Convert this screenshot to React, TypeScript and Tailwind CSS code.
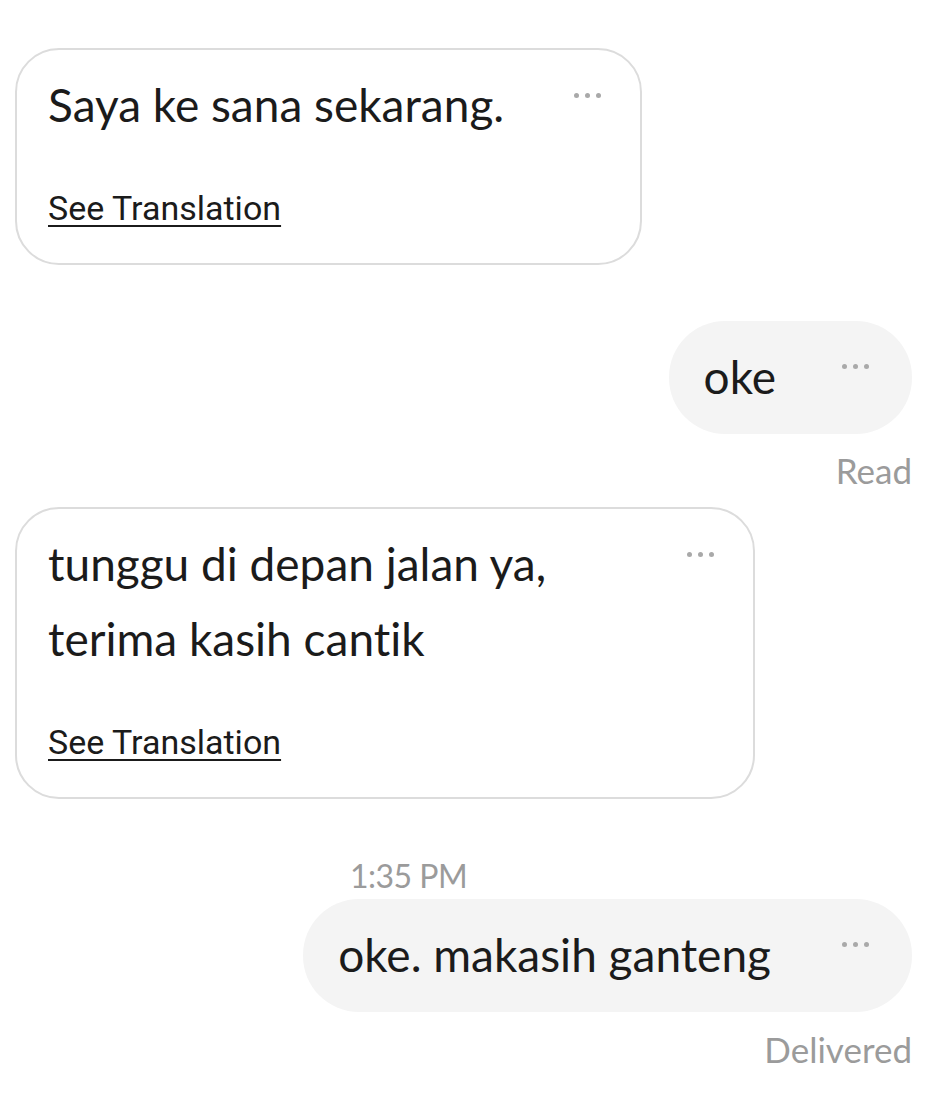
import React from "react";

const MAIN = { fontFamily: "Lato, 'Noto Sans', sans-serif", fontVariantLigatures: "none" as const };
const ROBO = { fontFamily: "Roboto, 'Noto Sans', sans-serif" };

function Dots() {
  return (
    <div className="flex gap-[6px] shrink-0">
      <span className="w-[5px] h-[5px] rounded-full bg-[#a9a9a9]" />
      <span className="w-[5px] h-[5px] rounded-full bg-[#a9a9a9]" />
      <span className="w-[5px] h-[5px] rounded-full bg-[#a9a9a9]" />
    </div>
  );
}

function Incoming({ lines, width }: { lines: string[]; width: string }) {
  return (
    <div
      className={`flex justify-between border-2 border-[#dcdcdc] rounded-[44px] bg-white pl-[31px] pr-[39px] pt-[17px] pb-[35px] ${width}`}
    >
      <div>
        {lines.map((l) => (
          <div key={l} className="text-[46px] leading-[75px] text-[#1b1b1b] whitespace-nowrap" style={MAIN}>
            {l}
          </div>
        ))}
        <div
          className="mt-[46px] text-[34px] leading-[40px] text-[#1b1b1b] underline underline-offset-[5px] decoration-[2px]"
          style={ROBO}
        >
          See Translation
        </div>
      </div>
      <div className="pt-[26px]">
        <Dots />
      </div>
    </div>
  );
}

function Outgoing({ text, gap }: { text: string; gap: string }) {
  return (
    <div className="inline-flex items-start bg-[#f4f4f4] rounded-[56px] pl-[35px] pr-[43px] pt-[18px] pb-[20px]">
      <div className="text-[46px] leading-[75px] text-[#1b1b1b] whitespace-nowrap" style={MAIN}>
        {text}
      </div>
      <div className={`pt-[25px] ${gap}`}>
        <Dots />
      </div>
    </div>
  );
}

export default function App() {
  return (
    <div className="w-[947px] h-[1113px] bg-white overflow-hidden pt-[48px] pl-[15px] pr-[35px]">
      <Incoming lines={["Saya ke sana sekarang."]} width="w-[627px]" />
      <div className="flex justify-end mt-[56px]">
        <Outgoing text="oke" gap="ml-[66px]" />
      </div>
      <div
        className="text-right text-[35px] leading-[40px] text-[#9b9b9b] mt-[16px]"
        style={MAIN}
      >
        Read
      </div>
      <div className="mt-[17px]">
        <Incoming lines={["tunggu di depan jalan ya,", "terima kasih cantik"]} width="w-[740px]" />
      </div>
      <div
        className="pl-[335px] text-[32px] leading-[40px] tracking-[-0.5px] text-[#9b9b9b] mt-[57px]"
        style={MAIN}
      >
        1:35 PM
      </div>
      <div className="flex justify-end mt-[3px]">
        <Outgoing text="oke. makasih ganteng" gap="ml-[71px]" />
      </div>
      <div
        className="text-right text-[35px] leading-[40px] text-[#9b9b9b] mt-[17px]"
        style={MAIN}
      >
        Delivered
      </div>
    </div>
  );
}
